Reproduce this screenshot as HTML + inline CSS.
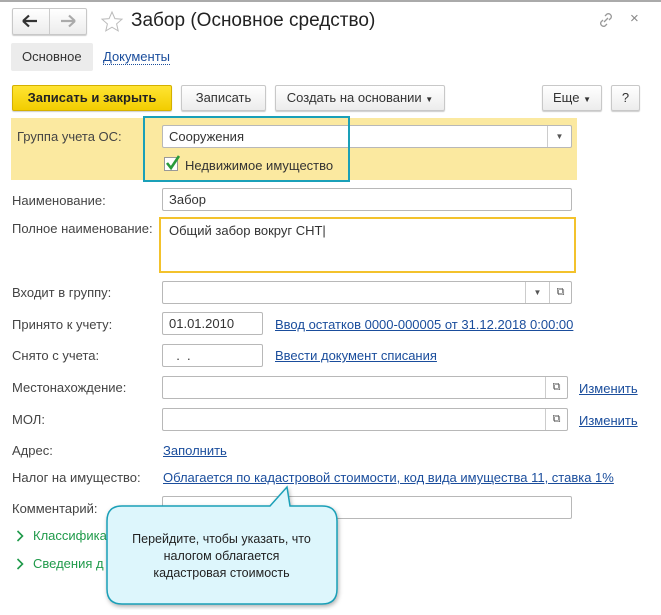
<!DOCTYPE html>
<html><head><meta charset="utf-8"><style>
*{box-sizing:border-box;margin:0;padding:0}
body{width:661px;height:615px;background:#fff;font-family:"Liberation Sans",Arial,sans-serif;font-size:13px;color:#333;position:relative;overflow:hidden}
.a{position:absolute;white-space:nowrap}
.btn{position:absolute;height:26px;border:1px solid #c8c8c8;border-radius:2px;background:linear-gradient(#fff,#ececec);box-shadow:0 1px 1px rgba(0,0,0,.2);font-size:13px;color:#333;text-align:center;line-height:24px}
.inp{position:absolute;height:23px;border:1px solid #b8b8b8;border-radius:2px;background:#fff;padding-left:6px;line-height:21px}
.lnk{color:#1a4d9c;text-decoration:underline}
.lbl{position:absolute;color:#444}
.sq{position:absolute;top:0;width:24px;height:21px;border-left:1px solid #ccc;text-align:center;font-size:8px;line-height:21px;color:#555}
</style></head><body>
<div class="a" style="left:0;top:0;width:661px;height:2px;background:#aaa"></div>
<div class="btn" style="left:12px;top:8px;width:75px;height:27px"></div>
<div class="a" style="left:49px;top:9px;width:1px;height:25px;background:#ccc"></div>
<svg class="a" style="left:22px;top:14px" width="16" height="14" viewBox="0 0 16 14"><path d="M1 7H15M1 7L7 1.5M1 7L7 12.5" fill="none" stroke="#333" stroke-width="2.2"/></svg>
<svg class="a" style="left:60px;top:14px" width="16" height="14" viewBox="0 0 16 14"><path d="M15 7H1M15 7L9 1.5M15 7L9 12.5" fill="none" stroke="#aaa" stroke-width="2.2"/></svg>
<svg class="a" style="left:100px;top:10px" width="24" height="24" viewBox="0 0 24 24"><path d="M12 2l2.9 6.6 7.1.6-5.4 4.7 1.6 7-6.2-3.7-6.2 3.7 1.6-7L2 9.2l7.1-.6z" fill="none" stroke="#bbb" stroke-width="1"/></svg>
<div class="a" style="left:131px;top:10px;font-size:19px;color:#222">Забор (Основное средство)</div>
<svg class="a" style="left:598px;top:12px" width="16" height="16" viewBox="0 0 16 16"><g fill="none" stroke="#999" stroke-width="1.3"><path d="M7 4l2-2a3 3 0 0 1 4 4l-2 2"/><path d="M9 12l-2 2a3 3 0 0 1-4-4l2-2"/><path d="M6 10l4-4"/></g></svg>
<div class="a" style="left:630px;top:10px;font-size:15px;color:#888">×</div>
<div class="a" style="left:11px;top:43px;width:82px;height:28px;background:#ececec;border-radius:2px"></div>
<div class="a" style="left:22px;top:49px">Основное</div>
<div class="a" style="left:103px;top:49px;color:#1a4d9c;border-bottom:1px dotted #1a4d9c;line-height:15px">Документы</div>
<div class="btn" style="left:12px;top:85px;width:160px;background:linear-gradient(#ffe433,#f2cd00);border-color:#d4b000;font-weight:bold;color:#222">Записать и закрыть</div>
<div class="btn" style="left:181px;top:85px;width:85px">Записать</div>
<div class="btn" style="left:275px;top:85px;width:170px">Создать на основании <span style="font-size:8px">▼</span></div>
<div class="btn" style="left:542px;top:85px;width:60px">Еще <span style="font-size:8px">▼</span></div>
<div class="btn" style="left:611px;top:85px;width:29px">?</div>
<div class="a" style="left:11px;top:118px;width:566px;height:62px;background:#fbe9a0"></div>
<div class="lbl" style="left:17px;top:129px">Группа учета ОС:</div>
<div class="inp" style="left:162px;top:125px;width:410px">Сооружения<div class="sq" style="right:0">▼</div></div>
<div class="a" style="left:164px;top:157px;width:14px;height:14px;border:1px solid #999;background:#fff"></div>
<svg class="a" style="left:164px;top:154px" width="18" height="18" viewBox="0 0 18 18"><path d="M3 9l4 5 8-12" fill="none" stroke="#2a9b3a" stroke-width="2.6"/></svg>
<div class="a" style="left:185px;top:158px">Недвижимое имущество</div>
<div class="a" style="left:143px;top:116px;width:207px;height:66px;border:2px solid #1aa0b8"></div>
<div class="lbl" style="left:12px;top:193px">Наименование:</div>
<div class="inp" style="left:162px;top:188px;width:410px">Забор</div>
<div class="lbl" style="left:12px;top:221px">Полное наименование:</div>
<div class="a" style="left:159px;top:217px;width:417px;height:56px;border:2px solid #f3c22c;padding:4px 8px">Общий забор вокруг СНТ|</div>
<div class="lbl" style="left:12px;top:285px">Входит в группу:</div>
<div class="inp" style="left:162px;top:281px;width:410px"><div class="sq" style="right:22px">▼</div><div class="sq" style="right:0;width:22px;font-size:11px">⧉</div></div>
<div class="lbl" style="left:12px;top:317px">Принято к учету:</div>
<div class="inp" style="left:162px;top:312px;width:101px">01.01.2010</div>
<div class="a lnk" style="left:275px;top:317px">Ввод остатков 0000-000005 от 31.12.2018 0:00:00</div>
<div class="lbl" style="left:12px;top:348px">Снято с учета:</div>
<div class="inp" style="left:162px;top:344px;width:101px">&nbsp;&nbsp;.&nbsp;&nbsp;.</div>
<div class="a lnk" style="left:275px;top:348px">Ввести документ списания</div>
<div class="lbl" style="left:12px;top:380px">Местонахождение:</div>
<div class="inp" style="left:162px;top:376px;width:406px"><div class="sq" style="right:0;width:22px;font-size:11px">⧉</div></div>
<div class="a lnk" style="left:579px;top:381px">Изменить</div>
<div class="lbl" style="left:12px;top:412px">МОЛ:</div>
<div class="inp" style="left:162px;top:408px;width:406px"><div class="sq" style="right:0;width:22px;font-size:11px">⧉</div></div>
<div class="a lnk" style="left:579px;top:413px">Изменить</div>
<div class="lbl" style="left:12px;top:443px">Адрес:</div>
<div class="a lnk" style="left:163px;top:443px">Заполнить</div>
<div class="lbl" style="left:12px;top:470px">Налог на имущество:</div>
<div class="a lnk" style="left:163px;top:470px">Облагается по кадастровой стоимости, код вида имущества 11, ставка 1%</div>
<div class="lbl" style="left:12px;top:501px">Комментарий:</div>
<div class="inp" style="left:162px;top:496px;width:410px"></div>
<svg class="a" style="left:16px;top:530px" width="8" height="12" viewBox="0 0 8 12"><path d="M1.5 1l5 5-5 5" fill="none" stroke="#1f9a4a" stroke-width="1.6"/></svg>
<div class="a" style="left:33px;top:528px;color:#1f9a4a">Классификация</div>
<svg class="a" style="left:16px;top:558px" width="8" height="12" viewBox="0 0 8 12"><path d="M1.5 1l5 5-5 5" fill="none" stroke="#1f9a4a" stroke-width="1.6"/></svg>
<div class="a" style="left:33px;top:556px;color:#1f9a4a">Сведения д</div>
<svg class="a" style="left:100px;top:482px" width="245" height="128" viewBox="0 0 245 128"><path d="M22 24H170L187 5L190 24H222Q237 24 237 39V107Q237 122 222 122H22Q7 122 7 107V39Q7 24 22 24Z" fill="#ddf6fc" stroke="#1aa0b8" stroke-width="1.5" style="filter:drop-shadow(1px 2px 2px rgba(0,0,0,.3))"/></svg>
<div class="a" style="left:105px;top:531px;width:233px;text-align:center;line-height:17px;white-space:normal;color:#222;font-size:12.5px">Перейдите, чтобы указать, что<br>налогом облагается<br>кадастровая стоимость</div>
</body></html>
